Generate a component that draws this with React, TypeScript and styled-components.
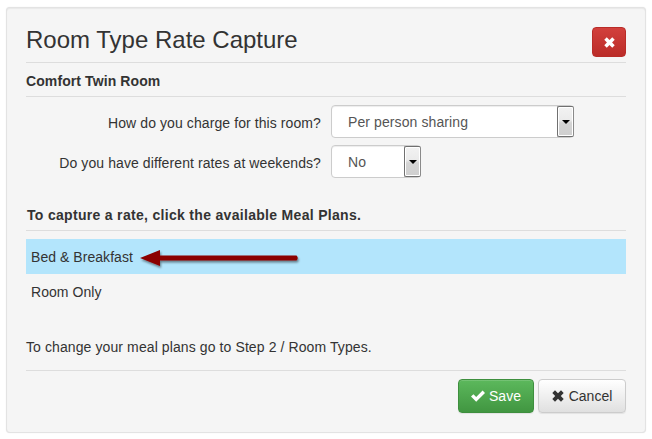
import React from 'react';
import styled, { createGlobalStyle } from 'styled-components';

const GlobalStyle = createGlobalStyle`
  html, body {
    margin: 0;
    background: #fff;
  }
  body {
    font-family: "Liberation Sans", Arial, sans-serif;
    font-size: 14px;
    line-height: 20px;
    color: #333;
  }
`;

const Page = styled.div`
  width: 652px;
  height: 439px;
  padding: 7px 6px;
  box-sizing: border-box;
  overflow: hidden;
`;

const Panel = styled.div`
  width: 640px;
  height: 426px;
  box-sizing: border-box;
  padding: 0 19px;
  background: #f5f5f5;
  border: 1px solid #e3e3e3;
  border-radius: 4px;
  box-shadow: inset 0 1px 1px rgba(0, 0, 0, 0.05), 0 0 1px rgba(0, 0, 0, 0.15);
`;

const Header = styled.div`
  display: flex;
  justify-content: space-between;
  align-items: flex-start;
  height: 54px;
  border-bottom: 1px solid #ddd;
`;

const Title = styled.h1`
  margin: 17px 0 0;
  font-size: 24px;
  line-height: 30px;
  font-weight: 400;
  color: #333;
`;

const CloseButton = styled.button`
  display: flex;
  align-items: center;
  justify-content: center;
  width: 34px;
  height: 30px;
  margin-top: 19px;
  padding: 0;
  color: #fff;
  background: linear-gradient(to bottom, #d2403c 0%, #bb2c28 100%);
  border: 1px solid #b92c28;
  border-radius: 4px;
`;

const SubHeading = styled.h2<{ $top: number; $spacing: number; $indent?: number }>`
  margin: ${(p) => p.$top}px 0 0;
  padding: 0 0 5px ${(p) => p.$indent ?? 0}px;
  font-size: 14px;
  line-height: 20px;
  font-weight: 700;
  letter-spacing: ${(p) => p.$spacing}px;
  border-bottom: 1px solid #ddd;
`;

const Form = styled.div`
  display: flex;
  flex-direction: column;
  gap: 7px;
  margin-top: 8px;
`;

const FormRow = styled.div`
  display: flex;
  align-items: center;
`;

const Label = styled.label`
  width: 295px;
  margin-top: 2px;
  text-align: right;
  letter-spacing: 0.09px;
  color: #333;
`;

const SelectBox = styled.div<{ $width: number }>`
  display: flex;
  align-items: stretch;
  justify-content: space-between;
  width: ${(p) => p.$width}px;
  height: 33px;
  box-sizing: border-box;
  margin-left: 10px;
  padding-left: 16px;
  background: #fff;
  border: 1px solid #ccc;
  border-radius: 4px;
  box-shadow: inset 0 1px 1px rgba(0, 0, 0, 0.075);
  color: #555;
  line-height: 33px;
  letter-spacing: 0.1px;
`;

const SelectArrow = styled.span`
  display: flex;
  align-items: center;
  justify-content: center;
  width: 17px;
  margin-right: -1px;
  box-sizing: border-box;
  border: 1px solid #707070;
  border-right-color: #8a8a8a;
  border-radius: 2px;
  box-shadow: inset 0 0 0 1px #fff;
  background: linear-gradient(to bottom, #f2f2f2 0%, #ebebeb 45%, #d4d4d4 55%, #cfcfcf 100%);

  &::after {
    content: '';
    border-style: solid;
    border-width: 4px 4px 0;
    border-color: #000 transparent transparent;
  }
`;

const PlanList = styled.div`
  position: relative;
  margin-top: 8px;
`;

const PlanRow = styled.div<{ $active?: boolean }>`
  height: 35px;
  padding-left: 5px;
  line-height: 37px;
  letter-spacing: 0.05px;
  background: ${(p) => (p.$active ? '#b3e5fc' : 'transparent')};
  color: #333;
`;

const Arrow = styled.svg`
  position: absolute;
  left: 113px;
  top: 7px;
  overflow: visible;
`;

const Note = styled.p`
  margin: 28px 0 0;
  letter-spacing: 0.1px;
  color: #333;
`;

const Footer = styled.div`
  display: flex;
  justify-content: flex-end;
  gap: 4px;
  margin-top: 13px;
  padding-top: 8px;
  border-top: 1px solid #ddd;
`;

const ActionButton = styled.button<{ $primary?: boolean; $width: number; $gap: number }>`
  display: flex;
  align-items: center;
  justify-content: center;
  gap: ${(p) => p.$gap}px;
  width: ${(p) => p.$width}px;
  height: 34px;
  box-sizing: border-box;
  padding: 0;
  font-family: inherit;
  font-size: 14px;
  color: ${(p) => (p.$primary ? '#fff' : '#333')};
  background: ${(p) =>
    p.$primary
      ? 'linear-gradient(to bottom, #5cb85c 0%, #419641 100%)'
      : 'linear-gradient(to bottom, #fff 0%, #e0e0e0 100%)'};
  border: 1px solid ${(p) => (p.$primary ? '#3e8f3e' : '#ccc')};
  border-radius: 4px;
  box-shadow: inset 0 1px 0 rgba(255, 255, 255, 0.15), 0 1px 1px rgba(0, 0, 0, 0.075);
`;

const RemoveIcon = ({ size }: { size: number }) => (
  <svg width={size} height={size} viewBox="0 0 12 12" fill="currentColor">
    <path d="M3 0.3 L6 3.2 L9 0.3 L11.7 3 L8.8 6 L11.7 9 L9 11.7 L6 8.8 L3 11.7 L0.3 9 L3.2 6 L0.3 3 Z" />
  </svg>
);

const OkIcon = () => (
  <svg width="14" height="12" viewBox="0 0 14 12" fill="currentColor">
    <path d="M0 6.6 L2.4 4.2 L5.2 7 L11.6 0.6 L14 3 L5.2 11.8 Z" />
  </svg>
);

const App = () => (
  <Page>
    <GlobalStyle />
    <Panel>
      <Header>
        <Title>Room Type Rate Capture</Title>
        <CloseButton>
          <RemoveIcon size={11} />
        </CloseButton>
      </Header>
      <SubHeading $top={8} $spacing={0.1}>Comfort Twin Room</SubHeading>
      <Form>
        <FormRow>
          <Label>How do you charge for this room?</Label>
          <SelectBox $width={243}>
            Per person sharing
            <SelectArrow />
          </SelectBox>
        </FormRow>
        <FormRow>
          <Label>Do you have different rates at weekends?</Label>
          <SelectBox $width={90}>
            No
            <SelectArrow />
          </SelectBox>
        </FormRow>
      </Form>
      <SubHeading $top={27} $spacing={0.31} $indent={1}>
        To capture a rate, click the available Meal Plans.
      </SubHeading>
      <PlanList>
        <PlanRow $active>Bed &amp; Breakfast</PlanRow>
        <PlanRow>Room Only</PlanRow>
        <Arrow width="160" height="24" viewBox="0 0 160 24">
          <defs>
            <filter id="arrowShadow" x="-10%" y="-50%" width="120%" height="220%">
              <feDropShadow dx="1" dy="2" stdDeviation="1.2" floodColor="#000" floodOpacity="0.45" />
            </filter>
          </defs>
          <path
            d="M1 12 L21 4 L21 9.5 L157.5 9.5 Q160 12 157.5 14.5 L21 14.5 L21 20 Z"
            fill="#8b0000"
            filter="url(#arrowShadow)"
          />
        </Arrow>
      </PlanList>
      <Note>To change your meal plans go to Step 2 / Room Types.</Note>
      <Footer>
        <ActionButton $primary $width={76} $gap={4}>
          <OkIcon />
          Save
        </ActionButton>
        <ActionButton $width={88} $gap={5}>
          <RemoveIcon size={12} />
          Cancel
        </ActionButton>
      </Footer>
    </Panel>
  </Page>
);

export default App;
